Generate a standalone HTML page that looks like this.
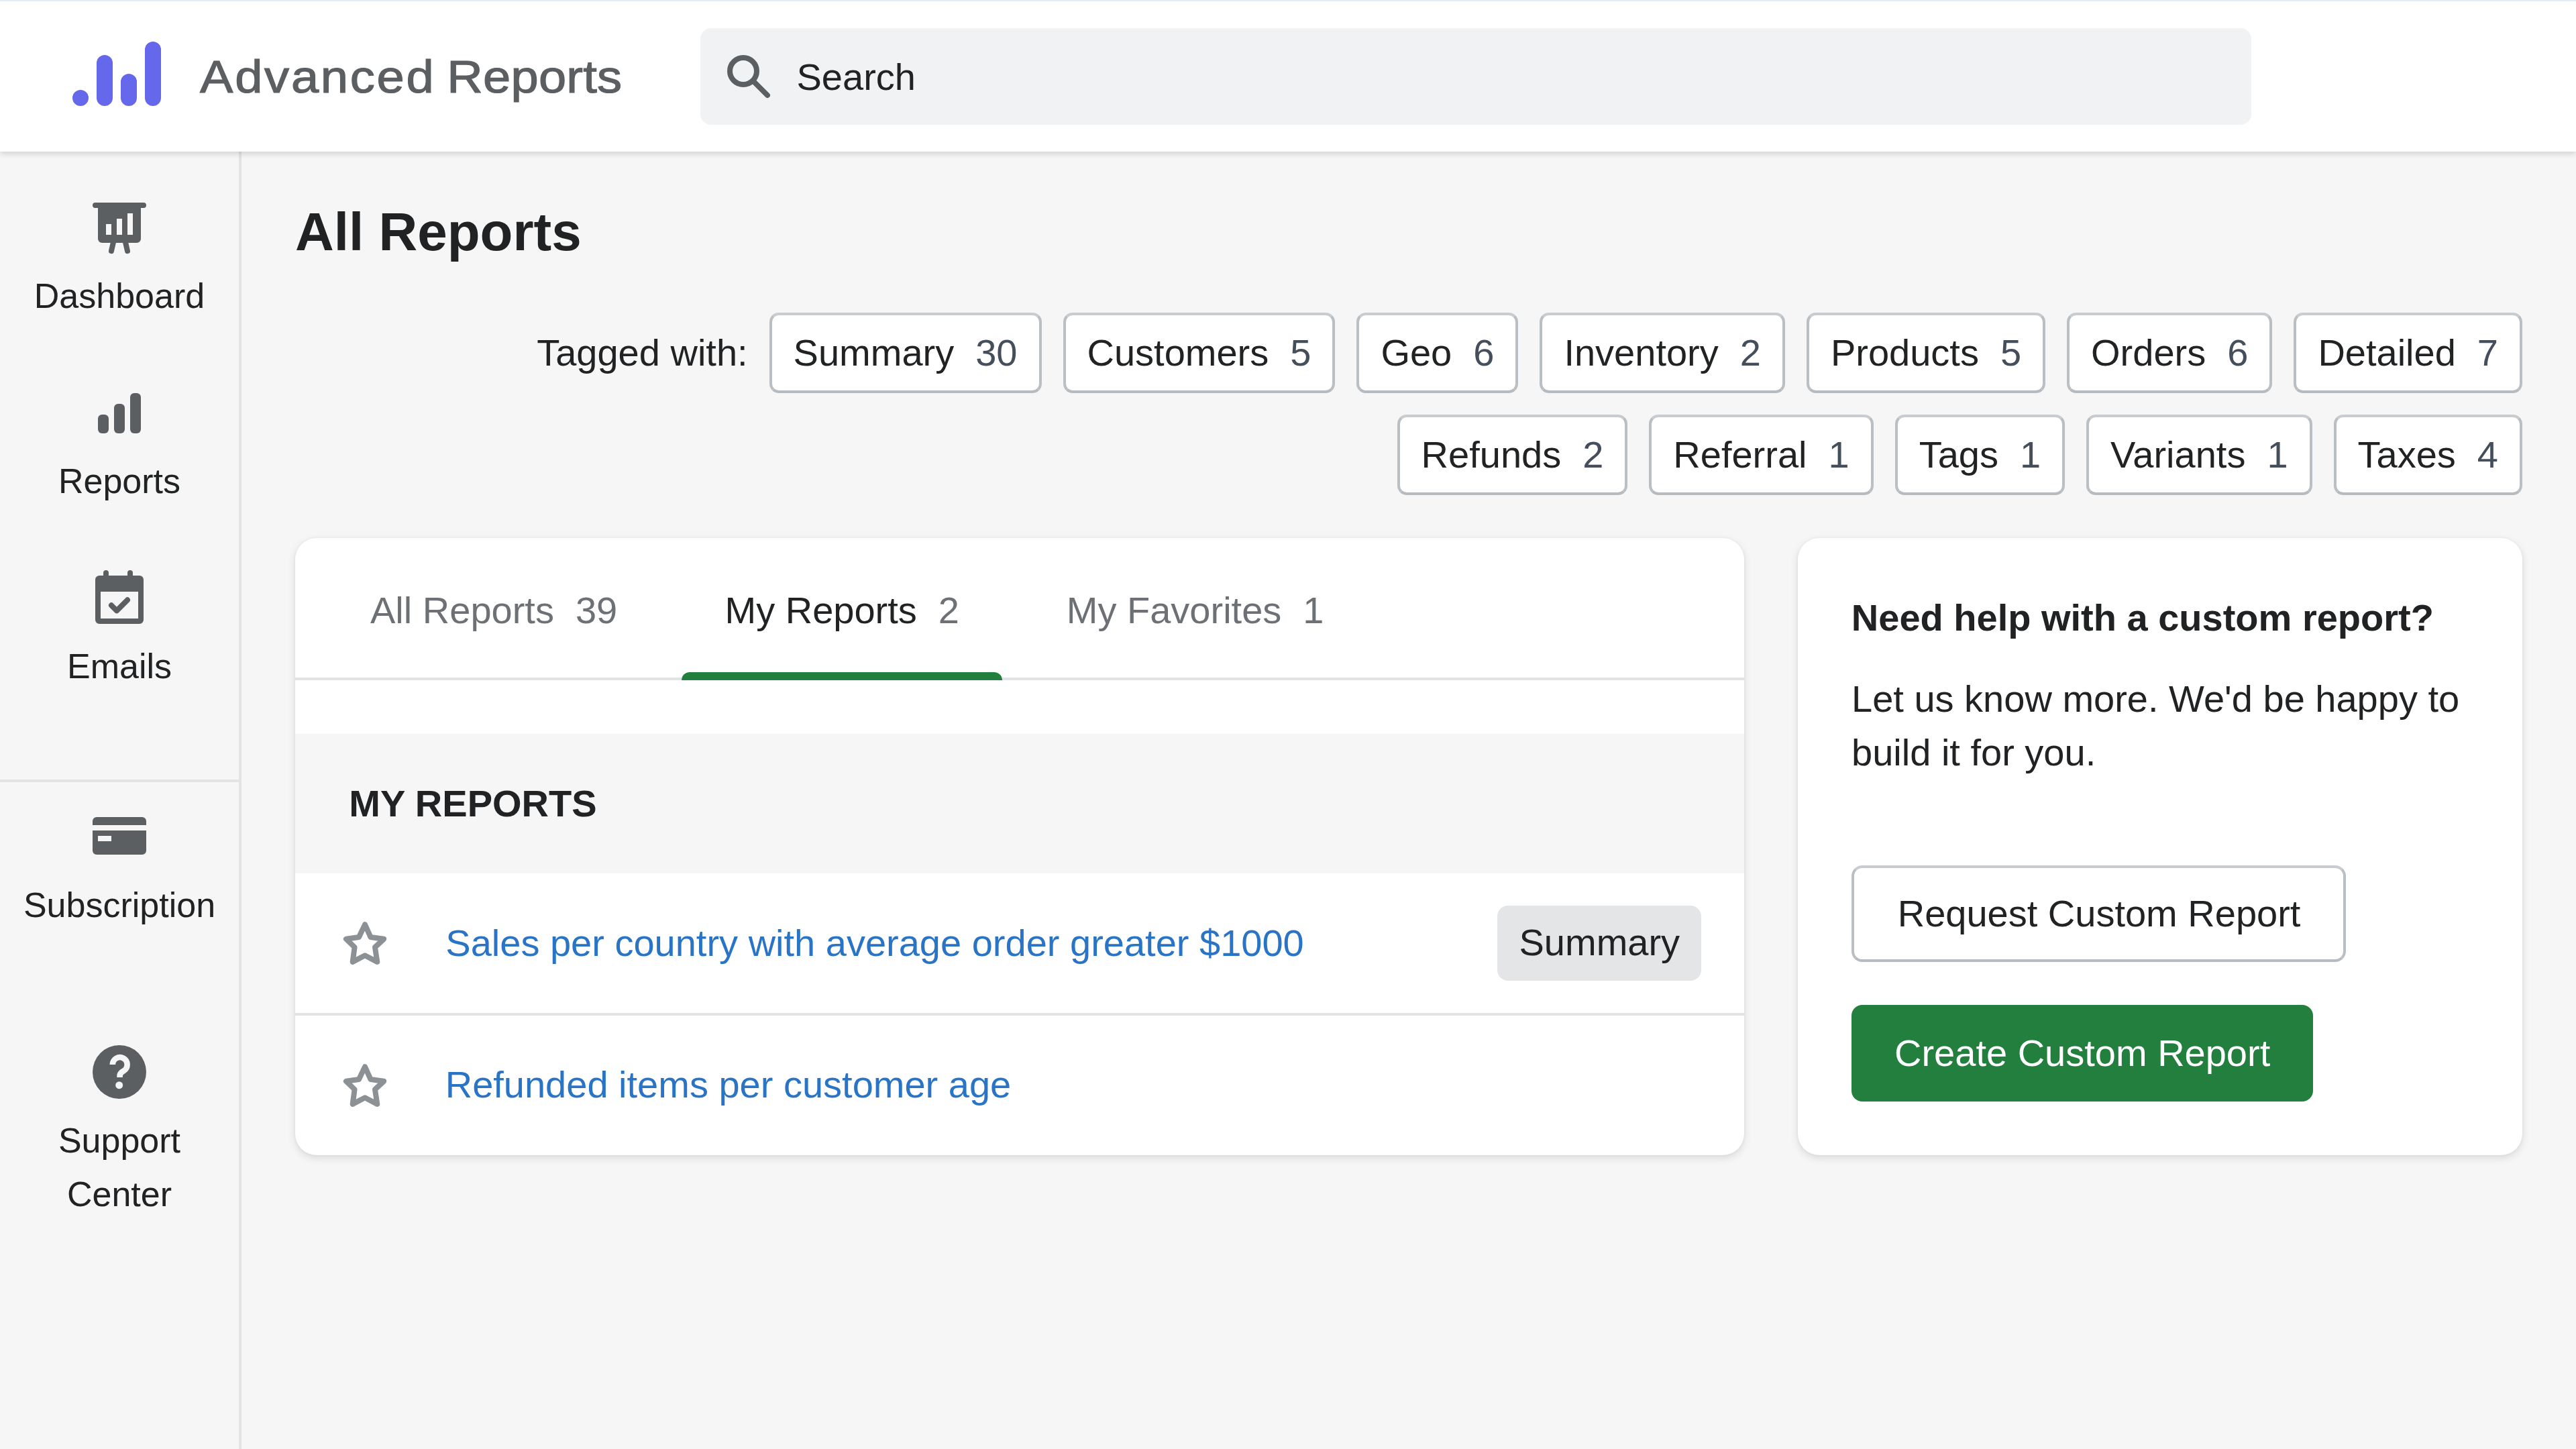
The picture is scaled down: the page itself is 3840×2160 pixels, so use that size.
<!DOCTYPE html>
<html><head><meta charset="utf-8">
<style>
*{box-sizing:border-box;margin:0;padding:0}
html,body{width:3840px;height:2160px;overflow:hidden;background:#f6f6f7;font-family:"Liberation Sans",sans-serif;color:#202223}
.a{position:absolute}
.t{position:absolute;white-space:nowrap;font-size:56px;line-height:80px}
#topline{left:0;top:0;width:3840px;height:2px;background:#e4ecf4;z-index:6}
#header{left:0;top:0;width:3840px;height:226px;background:#fff;box-shadow:0 2px 10px rgba(0,0,0,.19);z-index:5}
#logo-text{left:298px;top:63.5px;font-size:68px;line-height:100px;letter-spacing:1.5px;word-spacing:-5px;color:#5c5f62;transform:scaleX(1.09);transform-origin:0 0;-webkit-text-stroke:1.2px #5c5f62}
#search{left:1044px;top:42px;width:2312px;height:144px;background:#f1f2f3;border-radius:16px}
#sidebar{left:0;top:226px;width:360px;height:1934px;background:#f6f6f7;border-right:4px solid #e1e3e5}
.nav{left:0;width:356px;text-align:center;font-size:52px;line-height:80px;color:#202223;white-space:nowrap}
#sdiv{left:0;top:1162px;width:356px;height:4px;background:#e1e3e5}
.icon{position:absolute}
h1{position:absolute;left:440px;top:289.9px;font-size:80px;line-height:112px;font-weight:bold;white-space:nowrap}
.row{position:absolute;right:80px;display:flex;gap:32px;align-items:center;height:120px}
.lbl{font-size:56px;line-height:112px;white-space:nowrap}
.tag{height:120px;border:4px solid #babfc3;border-top-color:#c9cccf;border-bottom-color:#b6bbc0;border-radius:14px;background:#fff;padding:0 32px;font-size:56px;line-height:112px;white-space:nowrap;display:flex}
.tag .c{margin-left:32px;color:#454f5b}
.card{position:absolute;top:802px;height:920px;background:#fff;border-radius:32px;box-shadow:0 0 4px rgba(63,63,68,.06),0 4px 12px rgba(63,63,68,.15);overflow:hidden}
#card1{left:440px;width:2160px}
#card2{left:2680px;width:1080px}
.tabs{position:absolute;left:0;top:0;width:2160px;height:212px;border-bottom:4px solid #e1e3e5}
.tab{color:#6d7175}
.tab .c{margin-left:32px;color:#6d7175}
.tab.on{color:#202223}
#uline{left:576px;top:200px;width:478px;height:12px;background:#227f3e;border-radius:12px 12px 0 0}
#sect{left:0;top:292px;width:2160px;height:208px;background:#f6f6f7}
.rowline{left:0;width:2160px;height:4px;background:#e1e3e5}
.link{color:#2a74c6}
#badge{left:1792px;top:548px;width:304px;height:112px;background:#e4e5e7;border-radius:16px}
.btn{position:absolute;left:80px;height:144px;border-radius:16px;font-size:56px;white-space:nowrap}
#req{top:488px;width:737px;border:4px solid #babfc3;border-top-color:#c9cccf;border-bottom-color:#b6bbc0;background:#fff}
#crt{top:696px;width:688px;background:#227f3e;color:#fff}
</style></head><body>
<div id="topline" class="a"></div>
<div id="header" class="a">
  <svg class="icon" style="left:0;top:0" width="260" height="226" viewBox="0 0 260 226">
    <g fill="#6568ea">
      <circle cx="120" cy="146" r="12"/>
      <rect x="144" y="82" width="24" height="76" rx="12"/>
      <rect x="180" y="110" width="24" height="48" rx="12"/>
      <rect x="216" y="62" width="24" height="96" rx="12"/>
    </g>
  </svg>
  <div id="logo-text" class="a" style="white-space:nowrap"><span style="letter-spacing:2.5px">Advanced</span> <span style="letter-spacing:0.2px">Reports</span></div>
  <div id="search" class="a">
    <svg class="icon" style="left:0;top:0" width="200" height="144" viewBox="1044 42 200 144">
      <circle cx="1108" cy="106" r="20" fill="none" stroke="#5c5f62" stroke-width="8"/>
      <line x1="1122.5" y1="120.5" x2="1144" y2="142" stroke="#5c5f62" stroke-width="8" stroke-linecap="round"/>
    </svg>
    <div class="t" style="left:143.5px;top:33.2px">Search</div>
  </div>
</div>

<div id="sidebar" class="a">
</div>
<!-- sidebar icons (absolute page coords) -->
<svg class="icon" style="left:0;top:226px" width="356" height="1500" viewBox="0 226 356 1500">
  <g fill="#5c5f62">
    <!-- dashboard -->
    <path fill-rule="evenodd" d="M142 302h72a4 4 0 0 1 0 8h-4v46a6 6 0 0 1-6 6h-52a6 6 0 0 1-6-6v-46h-4a4 4 0 0 1 0-8zM158 334v16h8v-16zM174 326v24h8v-24zM190 318v32h8v-32z"/>
    <path d="M169.7 358L166 374.2" stroke="#5c5f62" stroke-width="8" stroke-linecap="round" fill="none"/>
    <path d="M186.3 358L190 374.2" stroke="#5c5f62" stroke-width="8" stroke-linecap="round" fill="none"/>
    <!-- reports -->
    <rect x="146" y="618" width="16" height="28" rx="6"/>
    <rect x="170" y="602" width="16" height="44" rx="6"/>
    <rect x="194" y="586" width="16" height="60" rx="6"/>
    <!-- emails -->
    <path fill-rule="evenodd" d="M158 850a4 4 0 0 1 4 4v4h28v-4a4 4 0 0 1 8 0v4h10a6 6 0 0 1 6 6v60a6 6 0 0 1-6 6h-60a6 6 0 0 1-6-6v-60a6 6 0 0 1 6-6h6v-4a4 4 0 0 1 4-4zM150 882v40h56v-40z"/>
    <path d="M166 902.3l8 8l16-16" stroke="#5c5f62" stroke-width="8" stroke-linecap="round" stroke-linejoin="round" fill="none"/>
    <!-- subscription -->
    <path fill-rule="evenodd" d="M144 1218h68a6 6 0 0 1 6 6v6h-80v-6a6 6 0 0 1 6-6zM138 1238h80v30a6 6 0 0 1-6 6h-68a6 6 0 0 1-6-6zM146 1246v8h20v-8z"/>
    <!-- help -->
    <circle cx="178" cy="1598" r="40"/>
  </g>
  <g fill="none" stroke="#f6f6f7" stroke-width="8.6">
    <path d="M167.8 1587a10.9 10.9 0 1 1 16.6 9.3c-4 2.3-5.8 4.5-5.8 7.5v2.2"/>
  </g>
  <circle cx="177.7" cy="1617.7" r="5.5" fill="#f6f6f7"/>
</svg>
<div class="a nav" style="top:401.2px">Dashboard</div>
<div class="a nav" style="top:677px">Reports</div>
<div class="a nav" style="top:953px">Emails</div>
<div id="sdiv" class="a"></div>
<div class="a nav" style="top:1309px">Subscription</div>
<div class="a nav" style="top:1661.2px;line-height:79.6px">Support<br>Center</div>

<h1>All Reports</h1>

<div class="row" style="top:466px">
  <div class="lbl">Tagged with:</div>
  <div class="tag">Summary<span class="c">30</span></div>
  <div class="tag">Customers<span class="c">5</span></div>
  <div class="tag">Geo<span class="c">6</span></div>
  <div class="tag">Inventory<span class="c">2</span></div>
  <div class="tag">Products<span class="c">5</span></div>
  <div class="tag">Orders<span class="c">6</span></div>
  <div class="tag">Detailed<span class="c">7</span></div>
</div>
<div class="row" style="top:618px">
  <div class="tag">Refunds<span class="c">2</span></div>
  <div class="tag">Referral<span class="c">1</span></div>
  <div class="tag">Tags<span class="c">1</span></div>
  <div class="tag">Variants<span class="c">1</span></div>
  <div class="tag">Taxes<span class="c">4</span></div>
</div>

<div id="card1" class="card">
  <div class="tabs"></div>
  <div class="t tab" style="left:112px;top:67.5px">All Reports<span class="c">39</span></div>
  <div class="t tab on" style="left:640.5px;top:67.5px">My Reports<span class="c">2</span></div>
  <div class="t tab" style="left:1149.8px;top:67.5px">My Favorites<span class="c">1</span></div>
  <div id="uline" class="a"></div>
  <div id="sect" class="a"></div>
  <div class="t" style="left:80.3px;top:355.8px;font-weight:bold">MY REPORTS</div>
  <svg class="icon" style="left:0;top:500px" width="200" height="420" viewBox="440 1302 200 420">
    <g fill="none" stroke="#8c9196" stroke-width="8" stroke-linejoin="round">
      <path id="star1" d="M544 1378.1L552.5 1397L572.2 1399.7L559 1412L562.3 1433.9L544 1424.3L525.7 1433.9L528.6 1412L515.9 1399.7L535 1397Z"/>
      <path d="M544 1590.1L552.5 1609L572.2 1611.7L559 1624L562.3 1645.9L544 1636.3L525.7 1645.9L528.6 1624L515.9 1611.7L535 1609Z"/>
    </g>
  </svg>
  <div class="t link" style="left:224.3px;top:564.2px">Sales per country with average order greater $1000</div>
  <div id="badge" class="a"></div>
  <div class="t" style="left:1824.5px;top:563.4px">Summary</div>
  <div class="a rowline" style="top:708px"></div>
  <div class="t link" style="left:223.7px;top:775.4px">Refunded items per customer age</div>
</div>

<div id="card2" class="card">
  <div class="t" style="left:79.8px;top:79.3px;font-weight:bold">Need help with a custom report?</div>
  <div class="a" style="left:80px;top:199.8px;width:920px;font-size:56px;line-height:80px">Let us know more. We'd be happy to build it for you.</div>
  <div id="req" class="btn"><div class="t" style="left:64.7px;top:28.4px">Request Custom Report</div></div>
  <div id="crt" class="btn"><div class="t" style="left:64px;top:32.4px">Create Custom Report</div></div>
</div>
</body></html>
